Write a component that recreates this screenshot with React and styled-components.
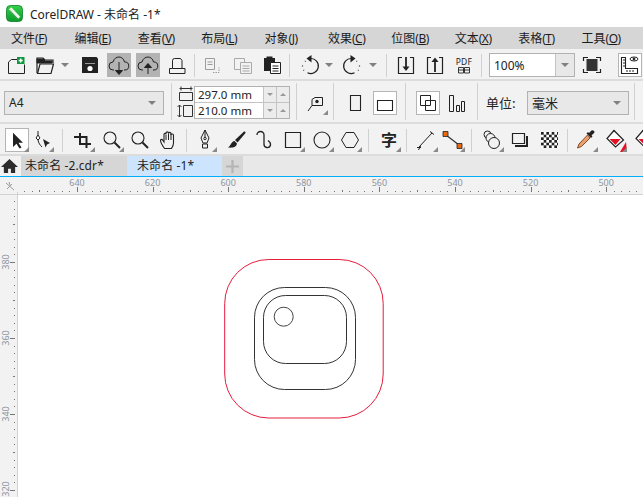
import React from "react";
import styled, { createGlobalStyle } from "styled-components";

const Global = createGlobalStyle`
  html, body { margin: 0; padding: 0; background: #fff; overflow: hidden; }
  body { font-family: "Noto Sans", "Noto Sans CJK SC", sans-serif; }
`;
const Page = styled.div`width: 643px; height: 497px; display: flex; flex-direction: column; overflow: hidden; background: #fff; color: #1a1a1a;`;
const TitleBar = styled.div`height: 27px; display: flex; align-items: center; gap: 7px; padding-left: 6px; font-size: 12px; color: #222; flex: none; font-family: "Noto Sans", "Noto Sans CJK SC", sans-serif;`;
const MenuBar = styled.div`height: 22px; background: #d6d6d6; display: flex; flex: none; padding-left: 11px;`;
const MenuItem = styled.div`width: 63.4px; flex: none; font-size: 12px; line-height: 22px; white-space: nowrap; color: #1c1c1c; font-family: "Noto Sans CJK SC", sans-serif; span { font-family: "Noto Sans", sans-serif; letter-spacing: -0.5px; }`;
const Bar = styled.div`
  flex: none; height: ${p => p.$h}px; background: #f2f2f2; display: flex; align-items: ${p => p.$stretch ? "stretch" : "center"}; gap: 5px;
  padding: 2px 0 0 4px; box-sizing: border-box; border-bottom: 2px solid #dcdcdc; overflow: hidden;
`;
const Tool = styled.div`
  width: 24px; height: 24px; flex: none; box-sizing: border-box; position: relative; align-self: center;
  margin-left: ${p => p.$ml || 0}px; margin-right: ${p => p.$mr || 0}px;
  background: ${p => p.$on === "dark" ? "#b3b3b3" : p.$on ? "#fff" : "transparent"};
  ${p => p.$on === "box" ? "outline: 1px solid #b5b5b5; outline-offset: -1px;" : ""}
  svg { display: block; }
`;
const GlyphTool = styled(Tool)`font-size: 16px; font-weight: 700; line-height: 23px; text-align: center; font-family: "Noto Sans CJK SC", sans-serif; color: #222;`;
const Corner = styled.i`position: absolute; right: 0; bottom: 0; width: 0; height: 0; border-style: solid; border-width: 0 0 5px 5px; border-color: transparent transparent #8a8a8a transparent;`;
const Arrow = styled.div`
  width: 12px; flex: none; display: flex; justify-content: center; margin: 0 2px 0 -3px;
  &::before { content: ""; border-style: solid; border-width: 4px 4px 0 4px; border-color: #808080 transparent transparent transparent; }
`;
const Sep = styled.div`
  width: 1px; flex: none; background: #d0d0d0; align-self: ${p => p.$full ? "stretch" : "center"}; height: ${p => p.$full ? "auto" : "23px"};
  margin-bottom: ${p => p.$full ? "2px" : "0"}; margin-left: ${p => p.$ml || 0}px; margin-right: ${p => p.$mr || 0}px;
`;
const Combo = styled.div`
  width: ${p => p.$w}px; height: 24px; flex: none; box-sizing: border-box; border: 1px solid #b2b2b2; align-self: center;
  display: flex; align-items: center; margin-left: ${p => p.$ml || 0}px; margin-right: ${p => p.$mr || 0}px;
  background: ${p => p.$white ? "#fff" : "#e8e8e8"}; font-size: ${p => p.$fs || 12}px;
  font-family: "Noto Sans", "Noto Sans CJK SC", sans-serif; color: #222;
`;
const ComboText = styled.div`flex: 1; padding-left: 4px; white-space: nowrap;`;
const ComboDrop = styled.div`
  width: ${p => p.$w}px; align-self: stretch; display: flex; align-items: center; justify-content: center; background: #e8e8e8;
  ${p => p.$line ? "border-left: 1px solid #c4c4c4;" : ""}
  &::before { content: ""; border-style: solid; border-width: 4px 4px 0 4px; border-color: #808080 transparent transparent transparent; }
`;
const DimIcons = styled.div`width: 22px; flex: none; margin: 0 -5px 0 -5px; align-self: center; svg { display: block; }`;
const DimGroup = styled.div`width: 96px; height: 33px; flex: none; align-self: center; border: 1px solid #b2b2b2; box-sizing: border-box; display: grid; grid-template-rows: 1fr 1fr; background: #fff;`;
const DimRow = styled.div`display: flex; font-size: 11.5px; color: #222; line-height: 15px; font-family: "Noto Sans", sans-serif; & + & { border-top: 1px solid #c4c4c4; }`;
const DimVal = styled.div`flex: 1; padding-left: 3px;`;
const Spin = styled.div`
  width: 12px; flex: none; background: #ececec; border-left: 1px solid #c4c4c4; display: flex; align-items: center; justify-content: center;
  &::before { content: ""; border-style: solid; border-width: ${p => p.$up ? "0 3px 3px 3px" : "3px 3px 0 3px"}; border-color: ${p => p.$up ? "transparent transparent #999 transparent" : "#999 transparent transparent transparent"}; }
`;
const UnitLabel = styled.div`font-size: 13px; flex: none; width: 36px; margin-left: 3px; font-family: "Noto Sans CJK SC", sans-serif; color: #222; align-self: center; white-space: nowrap;`;
const TabsBar = styled.div`height: 21px; flex: none; background: #e8e8e8; display: flex; box-sizing: border-box; border-bottom: 1px solid #00aeff;`;
const HomeSlot = styled.div`width: 21px; flex: none; background: #f2f2f2; display: flex; align-items: center; padding-left: 1px; box-sizing: border-box; svg { display: block; }`;
const Tab = styled.div`
  width: ${p => p.$w}px; flex: none; box-sizing: border-box; background: ${p => p.$on ? "#cce4fd" : "#d6d6d6"};
  padding-left: ${p => p.$pl}px; font-size: 12px; line-height: 20px; color: #222; white-space: nowrap; letter-spacing: 0.1px;
`;
const PlusTab = styled.div`width: 21px; flex: none; background: #d6d6d6; display: flex; align-items: center; justify-content: center; svg { display: block; }`;
const Work = styled.div`flex: 1; display: flex; min-height: 0;`;
const Svg = styled.svg`display: block; flex: none;`;
const Art = styled.svg`display: block; flex: none; background: #fff;`;
const RulerText = styled.text`font-family: "Noto Sans", sans-serif; font-size: 9px; fill: #8f959e;`;

const I = ({ children }) => <svg width="24" height="24" viewBox="0 0 24 24" fill="none" stroke="#222" strokeWidth="1">{children}</svg>;
const K = "#222";

const icons = {
  new: <><path d="M4.500 20.500V9L7.500 6.500H13M20.500 11.500V20.500H4.500"/><path d="M13 4h7.500v7H13z" fill="#0d9a3f" stroke="none"/><path d="M16.700 5.500v4M14.700 7.500h4" stroke="#fff" strokeWidth="1.500"/></>,
  open: <><path d="M4 20V5h6l2 2h8v3" strokeWidth="1.200"/><path d="M4 10V6h6l2 2h7v2z" fill={K}/><path d="M4.500 20.500L7 11h13.500L18 20.500z" strokeWidth="1.200" fill="#f2f2f2"/></>,
  save: <><path d="M4 4h14.500L20 5.500V20H4z" fill={K} stroke="none"/><path d="M7 10.500h10" stroke="#999" strokeWidth="1"/><circle cx="12" cy="15.500" r="2.600" fill="#fff" stroke="none"/></>,
  cloudDown: <><path d="M7 17H6a4 4 0 0 1 0-8c1-3.500 3.500-5 6-5s5 2 5.500 5a4 4 0 0 1 .500 8h-1" /><path d="M12 9v12M8.500 17.500L12 21.500l3.500-4z" fill={K}/></>,
  cloudUp: <><path d="M7 17H6a4 4 0 0 1 0-8c1-3.500 3.500-5 6-5s5 2 5.500 5a4 4 0 0 1 .500 8h-1" /><path d="M12 21V11M8.500 14.500L12 10.500l3.500 4z" fill={K}/></>,
  print: <><path d="M4.500 20.500V15.500h3V7.500a2 2 0 0 1 2-2h6l1.500 2v8h3v5z" /><path d="M7.500 15.500h9.500" /></>,
  copy: <g stroke="#9c9c9c"><path d="M6.500 5.500h9v11h-9zM8.500 9h5M8.500 11.500h5"/><path d="M14 19.500h6v-5" strokeDasharray="1.500 1"/></g>,
  copy2: <g stroke="#aaa"><path d="M3.500 5.500h10v11h-10z"/><path d="M9.500 9.500h11v11h-11z" fill="#f2f2f2"/><path d="M11.500 13h7M11.500 15.500h7M11.500 18h7"/></g>,
  paste: <><path d="M4 5h11v13H4z" fill={K} stroke="none"/><path d="M6.500 3.500h6V6h-6z" fill={K} stroke="none"/><path d="M10.500 9.500h10v11h-10z" fill="#fff"/><path d="M12.500 13h6M12.500 15.500h6M12.500 18h6"/></>,
  undo: <><path d="M13.500 5.500a7.500 7.500 0 1 1 -3 14.200" strokeWidth="1.200"/><path d="M5.500 12.500v1M6.500 17l.5.500M8 8.500l.5-.5" strokeWidth="1.200"/><path d="M14.500 2v7.500L9.500 5.500z" fill={K} stroke="none"/></>,
  redo: <g transform="matrix(-1 0 0 1 24 0)"><path d="M13.500 5.500a7.500 7.500 0 1 1 -3 14.200" strokeWidth="1.200"/><path d="M5.500 12.500v1M6.500 17l.5.500M8 8.500l.5-.5" strokeWidth="1.200"/><path d="M14.500 2v7.500L9.500 5.500z" fill={K} stroke="none"/></g>,
  importI: <><path d="M8 4.500H4.500v16h15v-16H16" strokeWidth="1.200"/><path d="M12 4v12" strokeWidth="1.800"/><path d="M8.500 13.500L12 18l3.500-4.500z" fill={K} stroke="none"/></>,
  exportI: <><path d="M8 4.500H4.500v16h15v-16H16" strokeWidth="1.200"/><path d="M12 19V8" strokeWidth="1.800"/><path d="M8.500 9L12 4.500 15.500 9z" fill={K} stroke="none"/></>,
  full: <><path d="M6.500 6h11v12h-11z" fill="#333" stroke="none"/><path d="M8 4.500H3.500V8M16 4.500h4.500V8M8 19.500H3.500V16M16 19.500h4.500V16" strokeWidth="1.200"/></>,
  rulerI: <><path d="M3.500 4.500v16h16v-5h-12v-11z" strokeWidth="1.100"/><path d="M5 7h2M5 10h2M5 13h2M9 17v2M12 17v2M15 17v2" /><ellipse cx="16" cy="6" rx="4" ry="2"/><circle cx="16" cy="6" r="1" fill={K}/></>,
  nudge: <><path d="M8 8.500l3-2h7.500v8H8z" /><circle cx="13" cy="10.500" r="1.700" fill={K} stroke="none"/><path d="M4 20l4-5.500" /></>,
  portrait: <path d="M7.500 4.500h10v15h-10z" strokeWidth="1.100"/>,
  landscape: <path d="M4.500 9.500h15v10h-15z" strokeWidth="1.100"/>,
  pages: <><path d="M4.500 4.500h10v10h-10z"/><path d="M9.500 9.500h10v10h-10z" /></>,
  bars: <path d="M4.500 4.500h4v16h-4zM11.500 14.500h3v6h-3zM16.500 10.500h3v10h-3z"/>,
  pick: <path d="M9 5v15l3.500-3.500 3 5 2-1-3-5h4.500z" fill="#222" stroke="none" transform="translate(-1 0) scale(1 .95)"/>,
  node: <><path d="M8 3v4M8 12c.5 3 2 5 4 7" /><path d="M8 7l-2 3 2 2 2-2z" fill="#fff"/><path d="M13 11l7 4-3 1.500-1.500 3z" fill={K} stroke="none"/></>,
  crop: <path d="M9 5v11h11M3 9h12.500v11" strokeWidth="2"/>,
  zoom: <><circle cx="10" cy="10" r="6" strokeWidth="1.100"/><path d="M14.500 14.500l5.500 5.500" strokeWidth="1.900"/></>,
  hand: <><path d="M7.500 20.500C5 17 3.500 14 3.500 12.500c0-1.500 1.500-1.500 2.500 0l1 1.500V6.500c0-1.500 2-1.500 2 0V5c0-1.500 2.500-1.500 2.500 0v.5c0-1.500 2.500-1.500 2.500 0V7c0-1.300 2.500-1.300 2.500.2V15c0 2-1 4-2 5.500z" strokeWidth="1.100"/><path d="M9 7v5M11.500 5.500V12M14 6v6"/></>,
  pen: <><path d="M12 2l4 8-2 5h-4L8 10zM12 2v7"/><circle cx="12" cy="10.500" r="1.200"/><path d="M9.500 16h5v4h-5z"/></>,
  brush: <><path d="M20 3.500L11 12l2.500 2.500L21.500 5a1.200 1.200 0 0 0-1.500-1.500z" fill={K} stroke="none"/><path d="M10.500 13c-3 0-3 4-6.500 6.500 4 .5 8.500 0 9-4z" fill={K} stroke="none"/></>,
  curve: <path d="M6 7a3.500 3.500 0 0 1 7 0v9a3.300 3.300 0 0 0 6.500 1c.3-2-1-3.500-2.500-4.500" strokeWidth="1.300"/>,
  rect: <path d="M4.500 4.500h15v15h-15z" strokeWidth="1.200"/>,
  ellipse: <circle cx="12" cy="12" r="8" strokeWidth="1.100"/>,
  polygon: <path d="M8 4.500h8l4.500 7.500-4.500 7.500H8L3.500 12z" strokeWidth="1"/>,
  line: <><path d="M5 19L18 5" /><path d="M3 19.500h4M4.500 22l2-4M16 3.500l4 3"/></>,
  connector: <><path d="M5 7l13 10" stroke="#333" strokeWidth="1.200"/><path d="M2 3.500h5v5H2zM16 15.500h5v5h-5z" fill="#e8670c" stroke="#222" strokeWidth=".8"/></>,
  blend: <><circle cx="7.500" cy="6.500" r="3.500"/><circle cx="10.500" cy="10" r="4.500" fill="#f2f2f2"/><circle cx="14" cy="15" r="5.500" fill="#f2f2f2"/></>,
  shadow: <><path d="M5.500 5.500h12v10h-12z" strokeWidth="1.200"/><path d="M20 8v10H8" strokeWidth="2"/></>,
  trans: <><path d="M4 4h17v16H4z" fill="#fff" stroke="none"/><path d="M4 4h17v16H4z" fill="url(#chk)" stroke="none"/></>,
  dropper: <><path d="M20 3c-1-1-2.500-1-3.500.5L15 5l-1-1-1.500 1.500 1.500 1.500 3 3 1.500-1.500-1-1 1.500-1.500c1.500-1 2-2.500 1-3z" fill="#222" stroke="none"/><path d="M13.500 7L5 16l-1.500 4 4-1.500L16 10z" fill="#e8a070" stroke="#8a4a1f" strokeWidth="1"/></>,
  fill: <><path d="M11 2.500l9.500 9.500-8 7-8.500-8.500z" fill="#fff" strokeWidth="1.200"/><path d="M6.500 11h11l-5 6z" fill="#e81123" stroke="none"/><path d="M12 4l-1.500-2" /><path d="M23 14l1 10h-7z" fill="#e81123" stroke="none"/></>,
};

const T = ({ n, on, ml, mr, c }) => (
  <Tool $on={on} $ml={ml} $mr={mr}>
    <I>{icons[n]}</I>{c && <Corner />}
  </Tool>
);

const PdfIcon = () => (
  <svg width="24" height="24" viewBox="0 0 24 24" fill="none" stroke="#222">
    <text x="12" y="12" textAnchor="middle" fontSize="8.500" fontFamily="'Noto Sans', sans-serif" fill="#222" stroke="none" letterSpacing=".3">PDF</text>
    <path d="M6.500 14.500h5v5.500h-5zM12.500 14.500h5v5.500h-5zM6.500 17h11" strokeWidth=".9"/>
  </svg>
);

const Menu = ({ a, k }) => <MenuItem>{a}<span>(<u>{k}</u>)</span></MenuItem>;
const menus = [["文件","F"],["编辑","E"],["查看","V"],["布局","L"],["对象","J"],["效果","C"],["位图","B"],["文本","X"],["表格","T"],["工具","O"]];

const Logo = () => (
  <svg width="17" height="17" viewBox="0 0 17 17">
    <defs><linearGradient id="lg" x1="0" y1="0" x2="0" y2="1"><stop offset="0" stopColor="#35d04a"/><stop offset="1" stopColor="#0a9a2a"/></linearGradient></defs>
    <rect x=".5" y=".5" width="16" height="16" rx="4" fill="url(#lg)" stroke="#0a7f25" strokeWidth=".8"/>
    <path d="M4 3.500l9 9.500" stroke="#e9f7e8" strokeWidth="3.500"/>
    <path d="M3.500 5l8.500 9" stroke="#1d6e2d" strokeWidth=".8"/>
  </svg>
);

const TopRuler = () => {
  const ticks = [];
  const x0 = 77, step = 7.56;
  for (let i = -10; i < 80; i++) {
    const x = x0 + i * step;
    if (x < 18 || x > 643) continue;
    const h = i % 10 === 0 ? 5 : (i % 5 === 0 ? 2 : 1);
    ticks.push(<rect key={i} x={Math.round(x)} y={192 - h} width="1" height={h} fill="#777" />);
  }
  const labels = [640, 620, 600, 580, 560, 540, 520, 500];
  return (
    <Svg width="643" height="18" viewBox="0 177 643 18">
      <rect x="0" y="177" width="643" height="18" fill="#f2f2f2" />
      <rect x="0" y="194" width="643" height="1" fill="#d2d2d2" />
      <rect x="17" y="192" width="1" height="3" fill="#d2d2d2" />
      <path d="M6 183l8 7M7 189l5-5M9 182l1 3" stroke="#9a9a9a" strokeWidth="1" fill="none" />
      {ticks}
      {labels.map((l, i) => <RulerText key={l} x={77 + i * 75.6} y="186" textAnchor="middle">{l}</RulerText>)}
    </Svg>
  );
};

const LeftRuler = () => {
  const ticks = [];
  for (let i = -8; i < 40; i++) {
    const y = 262 + i * 7.6;
    if (y < 195 || y > 497) continue;
    const w = i % 10 === 0 ? 5 : (i % 5 === 0 ? 2 : 1);
    ticks.push(<rect key={i} x={15 - w} y={Math.round(y)} width={w} height="1" fill="#777" />);
  }
  return (
    <Svg width="18" height="302" viewBox="0 195 18 302">
      <rect x="0" y="195" width="18" height="302" fill="#f2f2f2" />
      <rect x="17" y="195" width="1" height="302" fill="#d2d2d2" />
      {ticks}
      {[380, 360, 340, 320].map((l, i) => (
        <RulerText key={l} transform={`translate(9 ${i === 3 ? 489 : 262 + i * 76}) rotate(-90)`} textAnchor="middle">{l}</RulerText>
      ))}
    </Svg>
  );
};

export default function App() {
  return (
    <Page>
      <Global />
      <svg width="0" height="0" style={{ position: "absolute" }}>
        <defs>
          <pattern id="chk" width="5.340" height="5.340" patternUnits="userSpaceOnUse" x="4" y="4">
            <rect width="2.670" height="2.670" fill="#222" />
            <rect x="2.670" y="2.670" width="2.670" height="2.670" fill="#222" />
          </pattern>
        </defs>
      </svg>
      <TitleBar><Logo /><span>CorelDRAW - 未命名 -1*</span></TitleBar>
      <MenuBar>{menus.map(([a, k]) => <Menu key={k} a={a} k={k} />)}</MenuBar>

      <Bar $h={32}>
        <T n="new" />
        <T n="open" />
        <Arrow />
        <T n="save" />
        <T n="cloudDown" on="dark" />
        <T n="cloudUp" on="dark" />
        <T n="print" />
        <Sep />
        <T n="copy" ml={-1} />
        <T n="copy2" ml={3} />
        <T n="paste" />
        <Sep />
        <T n="undo" ml={2} />
        <Arrow />
        <T n="redo" ml={-1} />
        <Arrow />
        <Sep />
        <T n="importI" ml={2} />
        <T n="exportI" />
        <Tool><PdfIcon /></Tool>
        <Sep />
        <Combo $w={86} $white $ml={2}><ComboText>100%</ComboText><ComboDrop $w={18} $line /></Combo>
        <T n="full" />
        <T n="rulerI" on="box" ml={9} />
      </Bar>

      <Bar $h={43} $stretch>
        <Combo $w={160}><ComboText>A4</ComboText><ComboDrop $w={22} /></Combo>
        <Sep $full $ml={2} />
        <DimIcons>
          <svg width="22" height="33" viewBox="0 0 22 33" fill="none" stroke="#333">
            <path d="M7.500 2.500h13M9 .5v4M19 .5v4M7.500 6.500h13v8h-13z" />
            <path d="M7.500 19v12M5.500 21l2-2 2 2M5.500 29l2 2 2-2" />
            <path d="M11.500 19.500h9v11h-9z" />
          </svg>
        </DimIcons>
        <DimGroup>
          <DimRow><DimVal>297.0 mm</DimVal><Spin /><Spin $up /></DimRow>
          <DimRow><DimVal>210.0 mm</DimVal><Spin /><Spin $up /></DimRow>
        </DimGroup>
        <Sep $full $ml={1} />
        <T n="nudge" c ml={2} />
        <Sep $full $ml={0} />
        <T n="portrait" ml={4} />
        <T n="landscape" on="box" ml={1} />
        <Sep $full $ml={3} />
        <T n="pages" on="box" ml={5} />
        <T n="bars" />
        <Sep $full $ml={3} />
        <UnitLabel>单位:</UnitLabel>
        <Combo $w={102} $fs={13}><ComboText>毫米</ComboText><ComboDrop $w={22} /></Combo>
        <Sep $full />
      </Bar>

      <Bar $h={32}>
        <T n="pick" on="box" c ml={1} />
        <T n="node" c ml={-4} />
        <Sep $ml={3} />
        <T n="crop" c ml={3} />
        <T n="zoom" c />
        <T n="zoom" ml={-1} />
        <T n="hand" />
        <Sep />
        <T n="pen" c ml={1} />
        <T n="brush" ml={2} />
        <T n="curve" ml={-2} />
        <T n="rect" c ml={1} />
        <T n="ellipse" c />
        <T n="polygon" c ml={-1} />
        <Sep $ml={1} />
        <GlyphTool $ml={3}>字<Corner /></GlyphTool>
        <Sep />
        <T n="line" c ml={2} />
        <T n="connector" c ml={-2} />
        <Sep $ml={1} />
        <T n="blend" c ml={3} />
        <T n="shadow" ml={-2} />
        <T n="trans" ml={1} />
        <Sep $ml={1} />
        <T n="dropper" c ml={1} />
        <T n="fill" c />
        <T n="fill" c />
      </Bar>

      <TabsBar>
        <HomeSlot>
          <svg width="17" height="16" viewBox="0 0 18 17"><path d="M9 1L0 9.500h3V16h4.500v-4.500h3V16H15V9.500h3z" fill="#2c2c2c" /></svg>
        </HomeSlot>
        <Tab $w={106} $pl={4}>未命名 -2.cdr*</Tab>
        <Tab $w={95} $pl={10} $on>未命名 -1*</Tab>
        <PlusTab><svg width="13" height="13" viewBox="0 0 13 13"><path d="M6.500 0v13M0 6.500h13" stroke="#b4b4b4" strokeWidth="2.200"/></svg></PlusTab>
      </TabsBar>

      <TopRuler />
      <Work>
        <LeftRuler />
        <Art width="625" height="302" viewBox="18 195 625 302" fill="none">
          <rect x="224.700" y="259.500" width="158.500" height="158.500" rx="44" stroke="#e51c3c" strokeWidth="1" />
          <rect x="254.500" y="287.500" width="101" height="102" rx="30" stroke="#333" strokeWidth="1" />
          <rect x="263.500" y="295.500" width="83" height="68" rx="22" stroke="#333" strokeWidth="1" />
          <circle cx="283.700" cy="316.700" r="9.500" stroke="#444" strokeWidth="1" />
        </Art>
      </Work>
    </Page>
  );
}
